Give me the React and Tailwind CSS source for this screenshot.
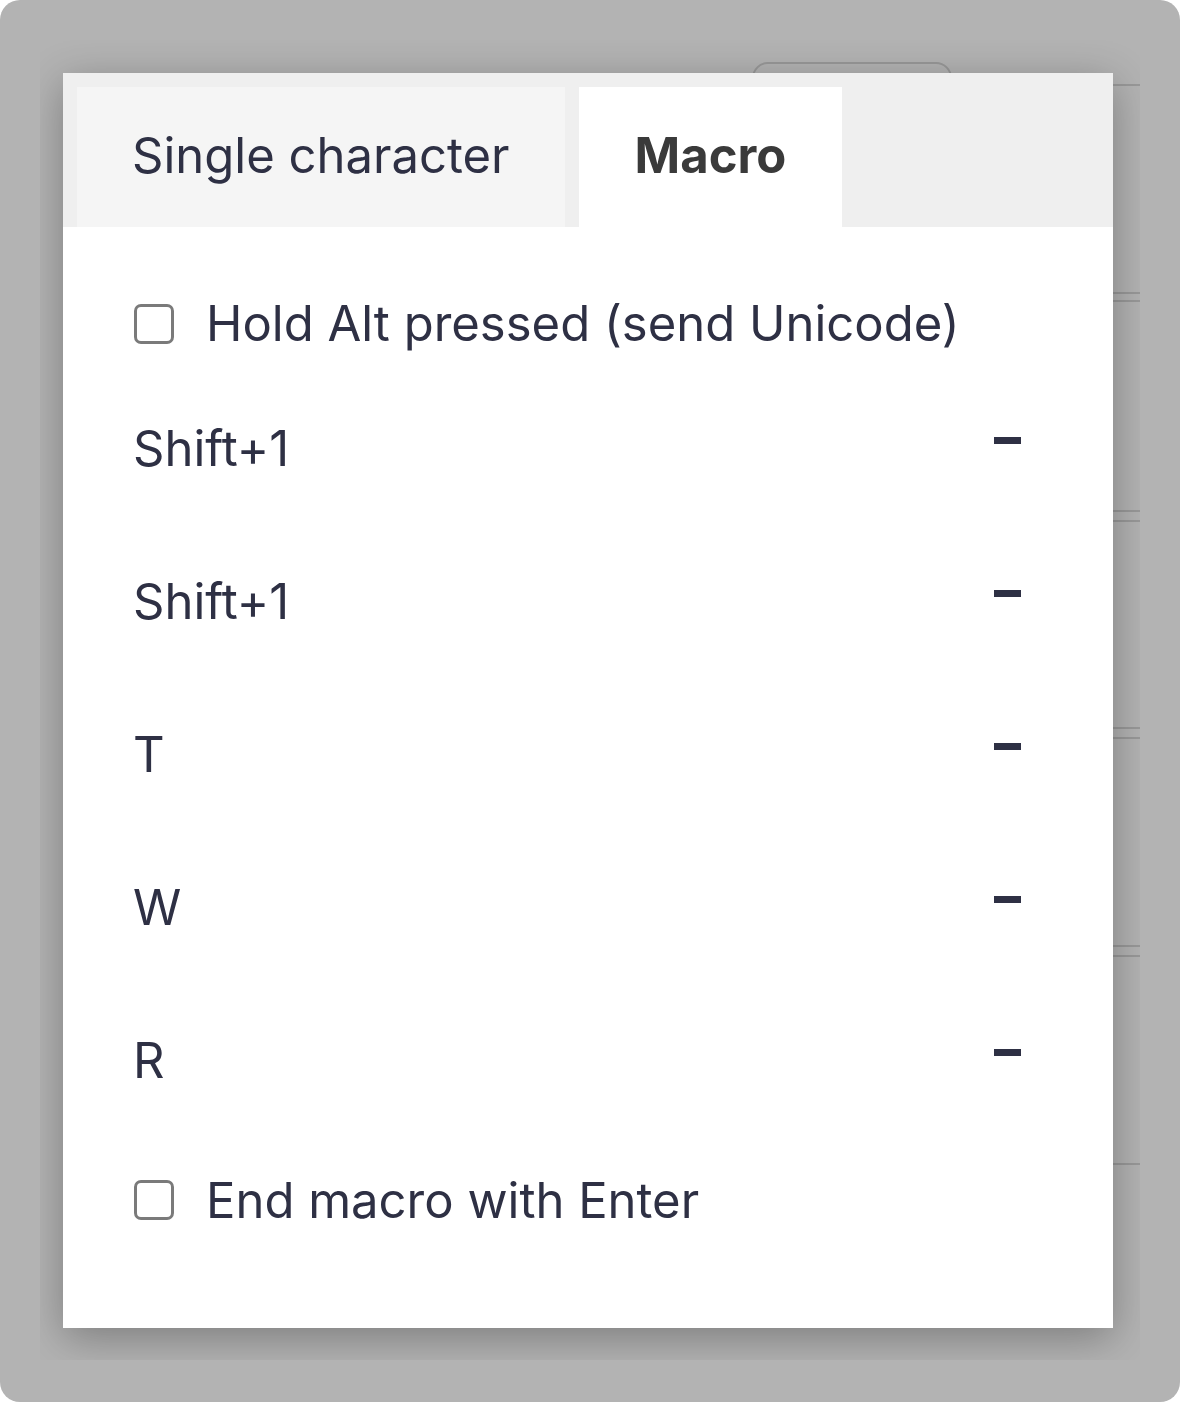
import React from "react";

const font = { fontFamily: "Inter, 'Noto Sans', sans-serif" };

function Checkbox() {
  return <div className="w-[40px] h-[40px] rounded-[7px] border-[3px] border-[#7a7a7a] bg-white shrink-0" />;
}

function MacroRow({ label }) {
  return (
    <div className="h-[153px] flex items-center justify-between pl-[70px] pr-[92px]">
      <span className="text-[49px] leading-none text-[#2e3044]">{label}</span>
      <div className="w-[27px] h-[7px] bg-[#2e3044] mb-[17px]" />
    </div>
  );
}

function Line() {
  return <div className="h-[2px] bg-[#999] ml-[200px]" />;
}

export default function App() {
  return (
    <div className="w-[1180px] h-[1402px] bg-[#b3b3b3] rounded-[20px] p-[40px]" style={font}>
      <div className="relative w-[1100px] h-[1320px] overflow-hidden bg-[#b3b3b3]">
        {/* background page */}
        <div className="flex flex-col">
          <div className="h-[44px] flex items-start pl-[712px] pt-[22px]">
            <div className="w-[200px] h-[40px] rounded-[16px] border-2 border-[#989898]" />
          </div>
          <Line />
          <div className="h-[206px]" />
          <Line />
          <div className="h-[6px]" />
          <Line />
          <div className="h-[208px]" />
          <Line />
          <div className="h-[8px]" />
          <Line />
          <div className="h-[205px]" />
          <Line />
          <div className="h-[8px]" />
          <Line />
          <div className="h-[206px]" />
          <Line />
          <div className="h-[8px]" />
          <Line />
          <div className="h-[206px]" />
          <Line />
        </div>

        {/* dialog */}
        <div className="absolute left-[23px] top-[33px] w-[1050px] h-[1255px] bg-white shadow-[0_10px_40px_rgba(0,0,0,0.3)] flex flex-col">
          <div className="h-[154px] bg-[#efefef] flex items-end gap-[14px] pl-[14px]">
            <div className="h-[140px] bg-[#f5f5f5] px-[55px] flex items-center pb-[4px]">
              <span className="text-[49px] leading-none text-[#2e3044]">Single character</span>
            </div>
            <div className="h-[140px] bg-white px-[56px] flex items-center pb-[4px]">
              <span className="text-[49px] leading-none font-bold text-[#3a3a3a]">Macro</span>
            </div>
          </div>
          <div className="pt-[48px] flex flex-col">
            <div className="h-[97px] flex items-center gap-[32px] pl-[71px]">
              <Checkbox />
              <span className="text-[49px] leading-none text-[#2e3044]">Hold Alt pressed (send Unicode)</span>
            </div>
            <MacroRow label="Shift+1" />
            <MacroRow label="Shift+1" />
            <MacroRow label="T" />
            <MacroRow label="W" />
            <MacroRow label="R" />
            <div className="h-[126px] flex items-center gap-[32px] pl-[71px]">
              <Checkbox />
              <span className="text-[49px] leading-none text-[#2e3044]">End macro with Enter</span>
            </div>
          </div>
        </div>
      </div>
    </div>
  );
}
